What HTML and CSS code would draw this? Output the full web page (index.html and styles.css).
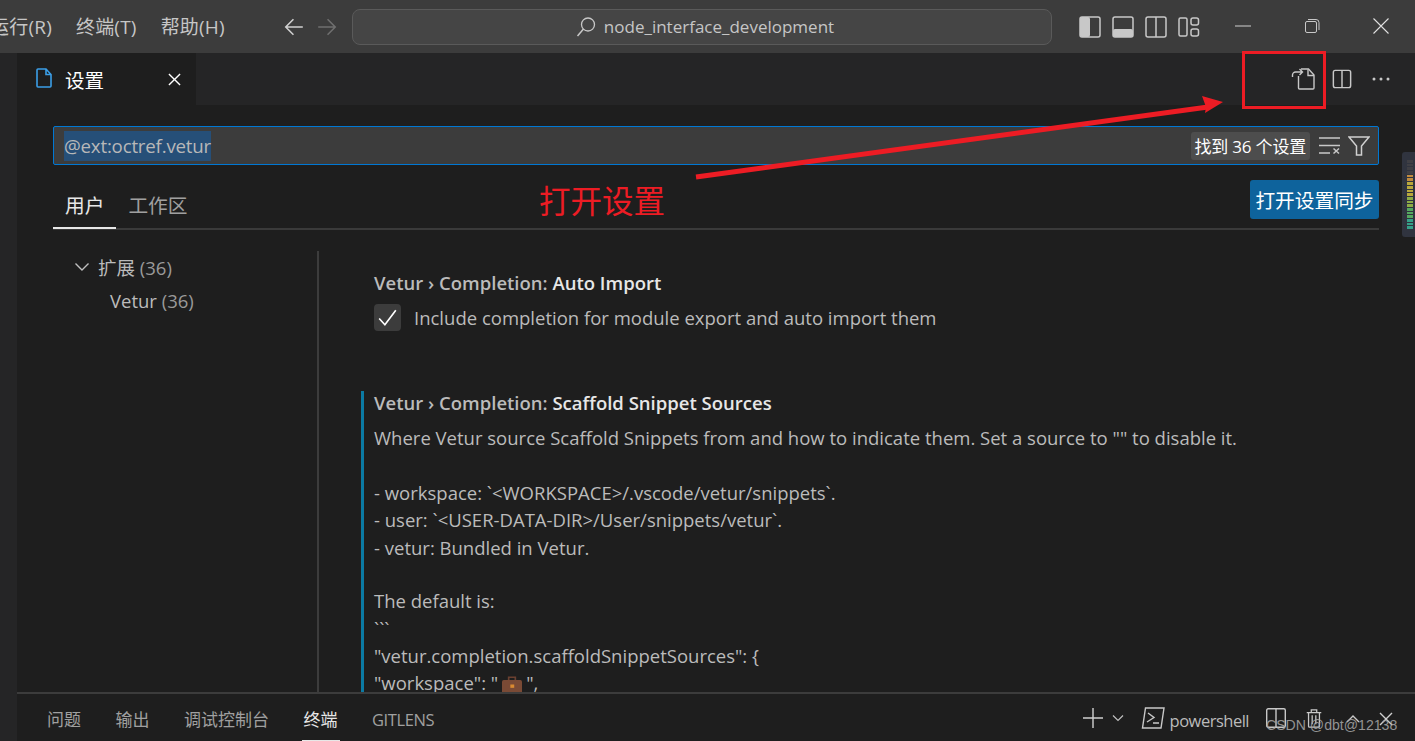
FILE: index.html
```html
<!DOCTYPE html>
<html lang="zh">
<head>
<meta charset="utf-8">
<title>设置</title>
<link rel="stylesheet" href="styles.css">
</head>
<body>
<header class="titlebar">
  <nav class="menu"><span>运行(R)</span><span>终端(T)</span><span>帮助(H)</span></nav>
  <div class="nav-arrows">
    <svg class="ic22" viewBox="0 0 20 20"><path d="M18 10H2.500M9.500 3l-7 7 7 7" fill="none" stroke="#d0d0d0" stroke-width="1.400"/></svg>
    <svg class="ic22" viewBox="0 0 20 20"><path d="M2 10h15.500M10.500 3l7 7-7 7" fill="none" stroke="#6f6f6f" stroke-width="1.400"/></svg>
  </div>
  <div class="command">
    <svg class="ic22" viewBox="0 0 22 22"><circle cx="13" cy="8.500" r="6.500" fill="none" stroke="#c8c8c8" stroke-width="1.300"/><path d="M8.500 13L2.500 20" stroke="#c8c8c8" stroke-width="1.500"/></svg>
    <span>node_interface_development</span>
  </div>
  <div class="layout-icons">
    <svg class="ic22" viewBox="0 0 22 22"><rect x="1" y="1" width="20" height="20" rx="2" fill="none" stroke="#c8c8c8" stroke-width="1.500"/><rect x="1" y="1" width="10" height="20" rx="2" fill="#c8c8c8"/></svg>
    <svg class="ic22" viewBox="0 0 22 22"><rect x="1" y="1" width="20" height="20" rx="2" fill="none" stroke="#c8c8c8" stroke-width="1.500"/><rect x="1" y="13" width="20" height="8" rx="2" fill="#c8c8c8"/></svg>
    <svg class="ic22" viewBox="0 0 22 22"><rect x="1" y="1" width="20" height="20" rx="2" fill="none" stroke="#c8c8c8" stroke-width="1.500"/><path d="M11 1v20" stroke="#c8c8c8" stroke-width="1.500"/></svg>
    <svg class="ic22" viewBox="0 0 22 22" fill="none" stroke="#c8c8c8" stroke-width="1.500"><rect x="1" y="2" width="8" height="18" rx="1.500"/><rect x="13" y="2" width="7.500" height="7" rx="2"/><rect x="13" y="13" width="7.500" height="7" rx="2"/></svg>
  </div>
  <div class="win-controls">
    <svg class="ic16" viewBox="0 0 16 16"><path d="M0 8h16" stroke="#d0d0d0" stroke-width="1"/></svg>
    <svg class="ic16" viewBox="0 0 16 16" fill="none" stroke="#c8c8c8" stroke-width="1"><rect x="1.500" y="3.500" width="11" height="11" rx="1.500"/><path d="M4 1.500h8a3 3 0 0 1 3 3V12"/></svg>
    <svg class="ic16" viewBox="0 0 16 16"><path d="M0.500 0.500l15 15M15.500 0.500l-15 15" stroke="#e0e0e0" stroke-width="1.100"/></svg>
  </div>
</header>

<div class="workbench">
  <div class="activity"></div>
  <main class="editor">
    <div class="tabbar">
      <div class="tab">
        <svg class="tab-file" viewBox="0 0 16 20"><path d="M1 2a1 1 0 0 1 1-1h8l5 5.500V18a1 1 0 0 1-1 1H2a1 1 0 0 1-1-1zM10 1v5.500h5" fill="none" stroke="#3b9fe8" stroke-width="1.600"/></svg>
        <span class="tab-title">设置</span>
        <svg class="tab-close" viewBox="0 0 14 14"><path d="M1 1l12 12M13 1L1 13" stroke="#fff" stroke-width="1.500"/></svg>
      </div>
      <div class="tab-actions">
        <svg class="ic24" viewBox="0 0 24 24" fill="none" stroke="#c8c8c8" stroke-width="1.400"><path d="M7.500 9v12a1 1 0 0 0 1 1H22a1 1 0 0 0 1-1V8l-5.500-6H10"/><path d="M17 2.500V8.500h6"/><path d="M1.500 10V8a3 3 0 0 1 3-3h7M8.500 2l3 3-3 3"/></svg>
        <svg class="ic20" viewBox="0 0 22 22" fill="none" stroke="#c8c8c8" stroke-width="1.600"><rect x="1.500" y="1.500" width="19" height="19" rx="2"/><path d="M11 1.500v19"/></svg>
        <svg class="ic20 dots" viewBox="0 0 20 20" fill="#c8c8c8"><circle cx="3" cy="10" r="1.500"/><circle cx="10" cy="10" r="1.500"/><circle cx="17" cy="10" r="1.500"/></svg>
      </div>
    </div>

    <section class="settings">
      <div class="search">
        <span class="query">@ext:octref.vetur</span>
        <span class="count">找到 36 个设置</span>
        <svg class="ic22" viewBox="0 0 22 22" fill="none" stroke="#c8c8c8" stroke-width="1.500"><path d="M0 3h21M0 10.500h21M0 18h11"/><path d="M14.500 13.500l5.500 5M20 13.500l-5.500 5"/></svg>
        <svg class="ic22" viewBox="0 0 22 22"><path d="M1 2h20l-7.500 9v9h-5v-9z" fill="none" stroke="#d0d0d0" stroke-width="1.500"/></svg>
      </div>
      <div class="scope-row">
        <div class="scopes">
          <span class="scope active">用户</span>
          <span class="scope">工作区</span>
        </div>
        <button class="sync">打开设置同步</button>
      </div>
      <div class="settings-body">
        <aside class="tree">
          <div class="tree-root">
            <svg class="chev" viewBox="0 0 16 16"><path d="M1.500 4.500L8 11l6.500-6.500" fill="none" stroke="#c0c0c0" stroke-width="1.400"/></svg>
            <span>扩展 <em>(36)</em></span>
          </div>
          <div class="tree-leaf">Vetur <em>(36)</em></div>
        </aside>
        <div class="list">
          <article class="setting">
            <h3><span class="cat">Vetur › Completion: </span>Auto Import</h3>
            <label class="check-row">
              <span class="checkbox"><svg viewBox="0 0 26 26"><path d="M5 14l5.500 6L21 6" fill="none" stroke="#fff" stroke-width="1.600"/></svg></span>
              <span>Include completion for module export and auto import them</span>
            </label>
          </article>
          <article class="setting focused">
            <h3><span class="cat">Vetur › Completion: </span>Scaffold Snippet Sources</h3>
            <div class="desc">
              <p>Where Vetur source Scaffold Snippets from and how to indicate them. Set a source to "" to disable it.</p>
              <p>- workspace: `&lt;WORKSPACE&gt;/.vscode/vetur/snippets`.<br>- user: `&lt;USER-DATA-DIR&gt;/User/snippets/vetur`.<br>- vetur: Bundled in Vetur.</p>
              <p>The default is:<br>```<br>"vetur.completion.scaffoldSnippetSources": {<br>"workspace": "<svg class="case" viewBox="0 0 18 16"><rect x="0" y="4" width="18" height="12" rx="1.500" fill="#7a4a35"/><path d="M6 4V1.500h6V4" fill="none" stroke="#6b4030" stroke-width="1.500"/><rect x="7.500" y="8" width="3.500" height="3" fill="#d98a32"/></svg>",</p>
            </div>
          </article>
        </div>
      </div>
    </section>

    <footer class="panel">
      <nav class="panel-tabs">
        <span>问题</span><span>输出</span><span>调试控制台</span><span class="active">终端</span><span class="latin">GITLENS</span>
      </nav>
      <div class="panel-actions">
        <svg class="ic20" viewBox="0 0 20 20"><path d="M10 0v20M0 10h20" stroke="#d0d0d0" stroke-width="1.400"/></svg>
        <svg class="chev-s" viewBox="0 0 12 12"><path d="M1 3.500l5 5 5-5" fill="none" stroke="#c0c0c0" stroke-width="1.200"/></svg>
        <svg class="ic24 term" viewBox="0 0 24 24" fill="none" stroke="#c8c8c8" stroke-width="1.400"><path d="M4.500 2H23l-3 20H1.500z"/><path d="M7 7l6 4.500L6 16M12 17h6"/></svg>
        <span class="shell">powershell</span>
        <svg class="ic20 split" viewBox="0 0 20 20" fill="none" stroke="#c8c8c8" stroke-width="1.400"><rect x="0.700" y="0.700" width="18.600" height="18.600" rx="1.500"/><path d="M10 0.700v18.600"/></svg>
        <svg class="ic20 trash" viewBox="0 0 18 22" fill="none" stroke="#c8c8c8" stroke-width="1.400"><path d="M1 5h16M6 5V2h6v3M3 5v15a1 1 0 0 0 1 1h10a1 1 0 0 0 1-1V5M7 8v10M11 8v10"/></svg>
        <svg class="ic16 up" viewBox="0 0 16 16"><path d="M2 11l6-6 6 6" fill="none" stroke="#c8c8c8" stroke-width="1.400"/></svg>
        <svg class="ic16 x" viewBox="0 0 16 16"><path d="M2 2l12 12M14 2L2 14" stroke="#d0d0d0" stroke-width="1.400"/></svg>
      </div>
    </footer>
  </main>
</div>

<div class="minimap">
  <i class="tick g"></i><i class="tick g"></i><i class="tick g"></i><i class="tick g"></i>
  <i class="tick o"></i><i class="tick o"></i><i class="tick y"></i><i class="tick y"></i><i class="tick y"></i><i class="tick y"></i><i class="tick l"></i><i class="tick l"></i><i class="tick l"></i><i class="tick e"></i><i class="tick e"></i><i class="tick e"></i><i class="tick t"></i><i class="tick t"></i><i class="tick t"></i>
</div>

<div class="anno-box"></div>
<svg class="anno-arrow" viewBox="0 0 540 90"><path d="M2 83L514 13" stroke="#ed1c24" stroke-width="5" fill="none"/><path d="M529 8L508 2L512 13L511 19z" fill="#ed1c24"/></svg>
<div class="anno-text">打开设置</div>
<div class="watermark">CSDN @dbt@12138</div>
</body>
</html>
```

FILE: styles.css
```css
* { box-sizing: border-box; }
html, body { margin: 0; padding: 0; }
body {
  width: 1415px;
  height: 741px;
  overflow: hidden;
  position: relative;
  display: flex;
  flex-direction: column;
  background: #1e1e1e;
  color: #bbbbbb;
  font-family: "Open Sans", "Noto Sans", "Noto Sans CJK SC", sans-serif;
  font-size: 18px;
}
svg { display: block; flex: none; }
.ic16 { width: 16px; height: 16px; }
.ic20 { width: 20px; height: 20px; }
.ic22 { width: 22px; height: 22px; }
.ic24 { width: 24px; height: 24px; }

.titlebar {
  height: 53px;
  flex: none;
  background: #3c3c3c;
  display: flex;
  align-items: center;
  color: #c6c6c6;
}
.menu { flex: none; display: flex; gap: 24px; margin: -2px 0 0 -10px; width: 234px; font-size: 19px; letter-spacing: 0.2px; white-space: nowrap; }
.nav-arrows { flex: none; display: flex; gap: 11px; width: 69px; margin-left: 59px; }
.command {
  flex: none;
  width: 700px;
  height: 36px;
  border: 1px solid #5a5a5a;
  border-radius: 8px;
  background: #454545;
  display: flex;
  align-items: center;
  justify-content: center;
  gap: 7px;
  font-size: 17px;
  padding-left: 5px;
}
.layout-icons { flex: none; display: flex; gap: 11px; margin-left: 27px; }
.win-controls { flex: none; display: flex; gap: 53px; margin-left: 35px; margin-top: -2px; align-items: center; }

.workbench { flex: 1; display: flex; min-height: 0; }
.activity { width: 17px; background: #252526; flex: none; }
.editor { flex: 1; min-width: 0; display: flex; flex-direction: column; }

.tabbar {
  height: 52px;
  flex: none;
  background: #252526;
  display: flex;
  align-items: center;
  justify-content: space-between;
  padding-right: 24px;
}
.tab {
  width: 179px;
  height: 52px;
  background: #1e1e1e;
  display: flex;
  align-items: center;
  padding-left: 19px;
  color: #fff;
  font-size: 19.500px;
}
.tab-file { width: 16px; height: 20px; margin-top: -2px; }
.tab-title { margin-left: 13px; width: 63px; }
.tab-close { width: 13px; height: 13px; margin-left: 40px; }
.tab-actions { display: flex; align-items: center; gap: 17px; }
.tab-actions .dots { margin-left: 2px; }

.settings { flex: 1; min-height: 0; display: flex; flex-direction: column; padding: 21px 36px 0; overflow: hidden; }
.search {
  height: 39px;
  flex: none;
  background: #3c3c3c;
  border: 1px solid #0078d4;
  border-radius: 2px;
  display: flex;
  align-items: center;
  padding: 0 8px 0 10px;
}
.query { background: #264f78; color: #b8b8b8; font-size: 18.700px; line-height: 30px; letter-spacing: -0.2px; margin-right: auto; margin-top: 1px; }
.count { background: #4d4d4d; color: #fff; font-size: 17px; border-radius: 3px; height: 28px; line-height: 30px; padding: 0 4px; margin-right: 9px; letter-spacing: -0.2px; }
.search .ic22 + .ic22 { margin-left: 7px; }

.scope-row {
  height: 65px;
  flex: none;
  display: flex;
  justify-content: space-between;
  align-items: flex-end;
  border-bottom: 2px solid #3a3a3a;
  position: relative;
}
.scopes { display: flex; }
.scope { font-size: 19.700px; color: #a0a0a0; height: 39px; line-height: 32px; padding: 0 12px; margin-bottom: -1px; }
.scope.active { color: #e7e7e7; border-bottom: 2px solid #e7e7e7; }
.sync {
  height: 39px;
  width: 129px;
  margin-bottom: 9px;
  padding: 0;
  border: 0;
  border-radius: 3px;
  background: #0e639c;
  color: #fff;
  font: inherit;
  font-size: 19.700px;
}

.settings-body { flex: 1; min-height: 0; display: flex; margin-top: 21px; }
.tree { width: 266px; flex: none; border-right: 2px solid #3c3c3c; padding-top: 2px; font-size: 18.500px; }
.tree em { font-style: normal; color: #999; }
.tree-root { display: flex; align-items: center; height: 27px; padding-left: 21px; gap: 8px; }
.chev { width: 16px; height: 16px; }
.tree-leaf { height: 27px; line-height: 33px; padding-left: 57px; margin-top: 4px; }

.list { flex: 1; min-width: 0; padding: 20px 0 0 42px; overflow: hidden; }
.setting { position: relative; padding-left: 13px; margin-bottom: 60px; }
.setting h3 { margin: 0; font-size: 18.500px; font-weight: 600; line-height: 24px; color: #e7e7e7; }
.cat { color: #bbbbbb; }
.check-row { display: flex; align-items: center; gap: 13px; margin-top: 9px; font-size: 18.500px; }
.checkbox { width: 27px; height: 27px; border-radius: 4px; background: #3c3c3c; display: block; }
.focused { border-left: 3px solid #0b7aa3; padding-left: 10px; margin-bottom: 0; }
.desc { margin-top: 9px; font-size: 18.500px; line-height: 27.200px; }
.desc p { margin: 0 0 26.500px; white-space: nowrap; }
.desc p:first-child { margin-bottom: 28px; }
.case { display: inline-block; width: 20px; height: 19px; margin: 0 4px; vertical-align: -4px; }

.panel {
  height: 49px;
  flex: none;
  border-top: 2px solid #3c3c3c;
  display: flex;
  justify-content: space-between;
  align-items: center;
  padding: 0 21px 0 30px;
  background: #1e1e1e;
  position: relative;
}
.panel-tabs { display: flex; gap: 34.500px; font-size: 17px; color: #a0a0a0; height: 47px; line-height: 52px; }
.panel-tabs span { display: block; height: 47px; }
.panel-tabs .active { color: #e7e7e7; border-bottom: 1px solid #e7e7e7; padding: 0 2px; margin: 0 -2px; }
.panel-tabs .latin { font-size: 16.500px; letter-spacing: -0.4px; }
.panel-actions { display: flex; align-items: center; margin-top: 1px; }
.chev-s { width: 12px; height: 12px; margin-left: 9px; }
.term { margin-left: 17px; }
.shell { font-size: 16.500px; margin-left: 5px; letter-spacing: -0.5px; margin-top: 4px; }
.split { margin-left: 17px; }
.trash { margin-left: 18px; }
.up { margin-left: 21px; margin-top: 2px; }
.x { margin-left: 17px; margin-top: 2px; }

.minimap {
  position: absolute;
  left: 1402px;
  top: 152px;
  width: 13px;
  height: 85px;
  background: #30343f;
  border-radius: 3px 0 0 3px;
  padding: 8px 2px 0 5px;
  display: flex;
  flex-direction: column;
  gap: 1px;
}
.tick { display: block; height: 2.700px; }
.tick.g { background: #3f3f44; }
.tick.o { background: #c08a3e; }
.tick.y { background: #b9a83c; }
.tick.l { background: #8dac45; }
.tick.e { background: #55a860; }
.tick.t { background: #35a088; }

.anno-box { position: absolute; left: 1242px; top: 51px; width: 84px; height: 58px; border: 3px solid #ed1c24; }
.anno-arrow { position: absolute; left: 694px; top: 94px; width: 540px; height: 90px; }
.anno-text { position: absolute; left: 539px; top: 180px; color: #ed1c24; font-size: 31.500px; line-height: 42px; }
.watermark { position: absolute; left: 1266px; top: 717px; font-family: "Liberation Sans", sans-serif; font-size: 14.100px; color: #a8a8a8; opacity: .85; white-space: nowrap; }
```
